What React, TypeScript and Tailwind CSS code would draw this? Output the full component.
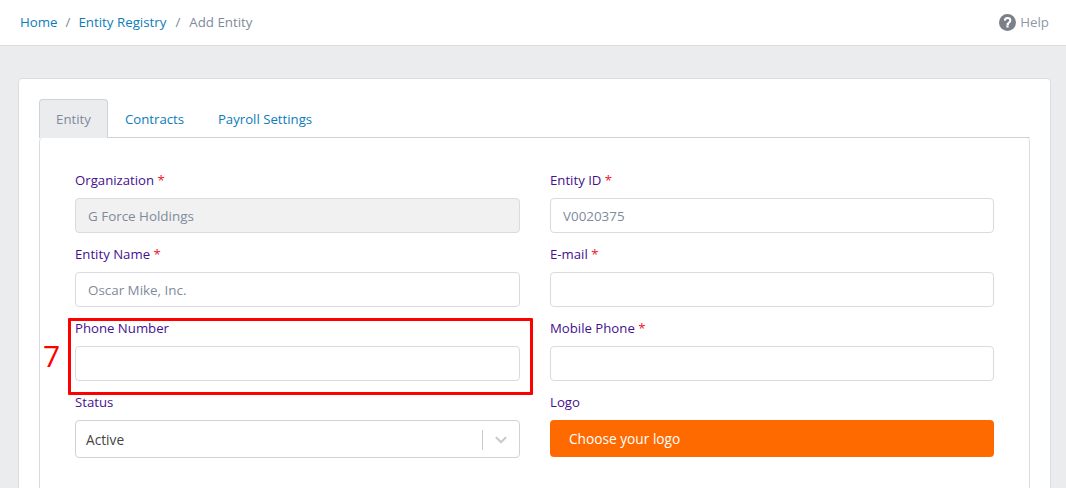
import { ChevronDown } from "lucide-react";

const font = "font-['Open_Sans',sans-serif]";

function Label({ text, required }: { text: string; required?: boolean }) {
  return (
    <label className="block h-[18px] text-[13.2px] leading-[18px] text-[#45108f]">
      {text}
      {required && <span className="text-[#f0142f]"> *</span>}
    </label>
  );
}

function Field({ label, required, value, disabled }: { label: string; required?: boolean; value?: string; disabled?: boolean }) {
  return (
    <div className="h-[74px]">
      <Label text={label} required={required} />
      <div
        className={`mt-[9px] flex h-[35px] items-center rounded border border-[#d9dbe0] px-3 pt-px text-[13.4px] text-[#7f8a9c] ${disabled ? "bg-[#f1f1f1]" : "bg-white"}`}
      >
        {value}
      </div>
    </div>
  );
}

export default function App() {
  return (
    <div className={`${font} h-[488px] overflow-hidden bg-[#ebecee]`}>
      <header className="flex h-[46px] items-center justify-between border-b border-[#dcdde0] bg-white pl-5 pr-[17px] text-[13.3px]">
        <nav className="flex items-center text-[#7f8a9c]">
          <span className="text-[#0c7cba]">Home</span>
          <span className="mx-2">/</span>
          <span className="text-[#0c7cba]">Entity Registry</span>
          <span className="mx-[9px]">/</span>
          <span>Add Entity</span>
        </nav>
        <div className="flex items-center gap-[4.5px] text-[#8f99a8]">
          <svg viewBox="0 0 24 24" className="h-[17px] w-[17px]">
            <circle cx="12" cy="12" r="12" fill="#7b7f88" />
            <path d="M8.2 9.300c.2-2.200 1.800-3.500 3.900-3.500 2.200 0 3.900 1.400 3.900 3.400 0 2.700-3.200 2.800-3.200 4.900h-2" fill="none" stroke="#fff" strokeWidth="2.800" />
            <rect x="10.400" y="16" width="3.200" height="3" fill="#fff" />
          </svg>
          Help
        </div>
      </header>

      <main className="px-[15px] pt-8 pl-[18px]">
        <div className="h-[420px] rounded border border-[#dcdde0] bg-white px-5 pt-5">
          <div className="flex h-[39px] border-b border-[#cfd2d8] text-[13.2px]">
            <div className="flex h-[39px] w-[69px] items-center justify-center rounded-t border border-b-0 border-[#cfd2d8] bg-[#ebecee] pt-[2px] text-[#7f8a9c]">
              Entity
            </div>
            <div className="flex w-[93px] items-center justify-center pt-[3px] text-[#0c7cba]">Contracts</div>
            <div className="flex w-[128px] items-center justify-center pt-[3px] text-[#0c7cba]">Payroll Settings</div>
          </div>
          <div className="h-[360px] rounded border border-t-0 border-[#d9dbe0] px-[35px] pt-[33px]">
            <div className="grid grid-cols-[445px_444px] gap-x-[30px]">
              <Field label="Organization" required value="G Force Holdings" disabled />
              <Field label="Entity ID" required value="V0020375" />
              <Field label="Entity Name" required value="Oscar Mike, Inc." />
              <Field label="E-mail" required />
              <div className="relative">
                <Field label="Phone Number" />
                <div className="absolute left-[-7px] right-[-13px] top-[-1px] h-[77px] rounded-[1px] border-[3px] border-[#ff0000]" />
                <span className="absolute left-[-32px] top-[17px] text-[30px] leading-[40px] text-[#ff0000]">7</span>
              </div>
              <Field label="Mobile Phone" required />
              <div>
                <Label text="Status" />
                <div className="mt-[9px] flex h-[38px] items-center justify-between rounded border border-[#d0d2d6] pl-[10px] pt-[2px] text-[13.7px] text-[#444]">
                  Active
                  <div className="flex items-center">
                    <span className="h-5 w-px bg-[#cccccc]" />
                    <ChevronDown className="mx-[9px] h-[18px] w-[18px] text-[#cccccc]" strokeWidth={3} />
                  </div>
                </div>
              </div>
              <div>
                <Label text="Logo" />
                <div className="mt-[9px] flex h-[37px] items-center rounded-sm bg-[#ff6a00] pl-[19px] pt-px text-[13.7px] text-white">
                  Choose your logo
                </div>
              </div>
            </div>
          </div>
        </div>
      </main>
    </div>
  );
}
